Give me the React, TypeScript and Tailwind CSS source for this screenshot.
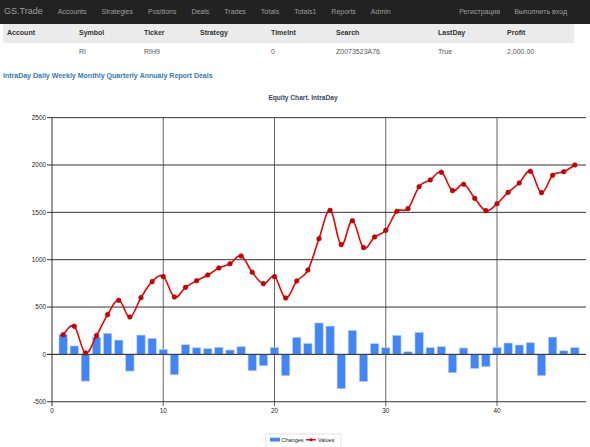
import React from "react";

// Equity values per step (profit curve), changes are derived from these
const VALUES = [
  208, 297, 15, 198, 420, 571, 395, 599, 768, 821, 606, 708, 778, 838, 912, 958,
  1039, 867, 747, 821, 596, 775, 890, 1222, 1521, 1159, 1412, 1127, 1240, 1310,
  1511, 1539, 1771, 1842, 1923, 1729, 1796, 1648, 1518, 1591, 1711, 1810, 1933,
  1708, 1891, 1929, 2000,
];

const NAV = ["Accounts", "Strategies", "Positions", "Deals", "Trades", "Totals", "Totals1", "Reports", "Admin"];
const LINKS = ["IntraDay", "Daily", "Weekly", "Monthly", "Quarterly", "Annualy", "Report", "Deals"];
const HEAD = ["Account", "Symbol", "Ticker", "Strategy", "TimeInt", "Search", "LastDay", "Profit"];
const ROW = ["", "RI", "RIH9", "", "0", "Z0073523A76", "True", "2,000.00"];

// plot geometry in page pixels
const LEFT = 52;
const RIGHT = 586;
const PX_X = (RIGHT - LEFT) / 48;
const ZERO_Y = 354.4;
const PX_Y = 0.0947;

const sx = (v: number) => LEFT + v * PX_X;
const sy = (v: number) => ZERO_Y - v * PX_Y;

function smoothPath(pts: { x: number; y: number }[]) {
  const t = 0.19;
  let d = `M${pts[0].x},${pts[0].y}`;
  for (let i = 0; i < pts.length - 1; i++) {
    const p0 = pts[i - 1] || pts[i];
    const p1 = pts[i];
    const p2 = pts[i + 1];
    const p3 = pts[i + 2] || p2;
    const c1x = p1.x + (p2.x - p0.x) * t;
    const c1y = p1.y + (p2.y - p0.y) * t;
    const c2x = p2.x - (p3.x - p1.x) * t;
    const c2y = p2.y - (p3.y - p1.y) * t;
    d += ` C${c1x},${c1y} ${c2x},${c2y} ${p2.x},${p2.y}`;
  }
  return d;
}

function EquityChart() {
  const pts = VALUES.map((v, i) => ({ x: sx(i + 1), y: sy(v) }));
  const changes = VALUES.map((v, i) => v - (i === 0 ? 0 : VALUES[i - 1]));
  const yTicks = [2500, 2000, 1500, 1000, 500, 0, -500];
  const xTicks = [10, 20, 30, 40];
  const barW = 8.3;

  return (
    <svg width={590} height={363} viewBox="0 84 590 363" className="block">
      <text x={303} y={100} textAnchor="middle" fontSize={6.6} fontWeight={700} fill="#3a4766" fontFamily="'Liberation Sans', Arial, sans-serif">
        Equity Chart. IntraDay
      </text>

      {/* vertical grid */}
      {xTicks.map((t) => (
        <line key={t} x1={sx(t)} x2={sx(t)} y1={sy(2500)} y2={406} stroke="#666" strokeWidth={1} />
      ))}

      {/* horizontal grid */}
      {yTicks.map((t) => (
        <line key={t} x1={47} x2={RIGHT} y1={sy(t)} y2={sy(t)} stroke="#333" strokeWidth={1} />
      ))}

      {/* bars */}
      {changes.map((c, i) => {
        const x = sx(i + 1) - barW / 2;
        const y = c >= 0 ? sy(c) : ZERO_Y;
        return (
          <rect key={i} x={x} y={y} width={barW} height={Math.abs(c) * PX_Y} fill="#4285f4" stroke="#b3cffa" strokeWidth={0.6} />
        );
      })}

      <line x1={LEFT} x2={LEFT} y1={sy(2500)} y2={406} stroke="#333" strokeWidth={1} />
      <line x1={47} x2={RIGHT} y1={ZERO_Y} y2={ZERO_Y} stroke="#333" strokeWidth={1} />

      {/* equity line */}
      <path d={smoothPath(pts)} fill="none" stroke="#ee0000" strokeWidth={1.6} />
      {pts.map((p, i) => (
        <circle key={i} cx={p.x} cy={p.y} r={2.3} fill="#d10000" stroke="#9a0000" strokeWidth={0.6} />
      ))}

      {/* axis labels */}
      <g fontSize={6.4} fill="#222" fontFamily="'Liberation Sans', Arial, sans-serif">
        {yTicks.map((t) => (
          <text key={t} x={46} y={sy(t) + 2.2} textAnchor="end">
            {t}
          </text>
        ))}
        {[0, ...xTicks].map((t) => (
          <text key={t} x={sx(t)} y={412.5} textAnchor="middle">
            {t}
          </text>
        ))}
      </g>

      {/* legend */}
      <rect x={266} y={434} width={75} height={16} fill="#fff" stroke="#dcdcdc" strokeWidth={0.8} />
      <rect x={270} y={437.7} width={10} height={3.8} fill="#4285f4" />
      <line x1={306} x2={316} y1={439.8} y2={439.8} stroke="#ee0000" strokeWidth={1.4} />
      <circle cx={311} cy={439.8} r={1.5} fill="#c00000" />
      <g fontSize={5.5} fill="#222" fontFamily="'Liberation Sans', Arial, sans-serif">
        <text x={281.5} y={441.7}>Changes</text>
        <text x={318} y={441.7}>Values</text>
      </g>
    </svg>
  );
}

export default function App() {
  return (
    <div className="w-[590px] h-[447px] overflow-hidden bg-white font-['Liberation_Sans',Arial,sans-serif]">
      {/* top navbar */}
      <div className="h-[24px] bg-[#222] flex items-center text-[#9d9d9d] text-[7px] pl-[4px] pr-[23px]">
        <span className="text-[9px] mr-[15px]">GS.Trade</span>
        <div className="flex gap-[15px]">
          {NAV.map((n) => (
            <span key={n}>{n}</span>
          ))}
        </div>
        <div className="ml-auto flex gap-[14px]">
          <span>Регистрация</span>
          <span>Выполнить вход</span>
        </div>
      </div>

      {/* account table */}
      <div className="ml-[3px] w-[571px] text-[7px]">
        <div className="h-[19px] bg-[#ebebeb] grid grid-cols-[72px_65px_56px_71px_65px_102px_69px_1fr] items-center pl-[4px] font-bold text-[#333]">
          {HEAD.map((h) => (
            <span key={h}>{h}</span>
          ))}
        </div>
        <div className="h-[19px] grid grid-cols-[72px_65px_56px_71px_65px_102px_69px_1fr] items-center pl-[4px] text-[#555]">
          {ROW.map((c, i) => (
            <span key={i} className="text-[#555]">{c}</span>
          ))}
        </div>
      </div>

      {/* report links */}
      <div className="h-[22px] pt-[9px] pl-[3px] text-[7px] leading-[9px] font-bold text-[#337ab7] flex gap-[2px]">
        {LINKS.map((l) => (
          <span key={l}>{l}</span>
        ))}
      </div>

      <EquityChart />
    </div>
  );
}
